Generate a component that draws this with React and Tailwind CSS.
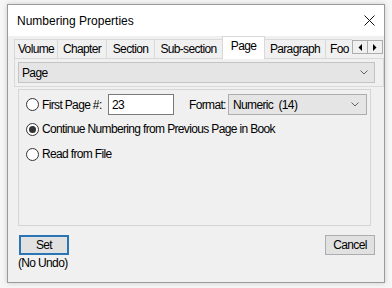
import React from 'react';

const tabs = [
  { label: 'Volume', w: 'w-[44px]' },
  { label: 'Chapter', w: 'w-[50px]' },
  { label: 'Section', w: 'w-[49px]' },
  { label: 'Sub-section', w: 'w-[69px]' },
  { label: 'Page', w: 'w-[43px]', active: true },
  { label: 'Paragraph', w: 'w-[62px]' },
  { label: 'Foo', w: 'w-[60px]', clipped: true },
];

const Chevron = () => (
  <svg width="8" height="5" viewBox="0 0 8 5" className="shrink-0">
    <path d="M0.5 0.5 L4 4 L7.5 0.5" fill="none" stroke="#606060" strokeWidth="1" />
  </svg>
);

const Radio = ({ checked }) => (
  <div className="flex h-[13px] w-[13px] shrink-0 items-center justify-center rounded-full border border-[#333] bg-white">
    {checked && <div className="h-[7px] w-[7px] rounded-full bg-[#333]" />}
  </div>
);

export default function App() {
  return (
    <div className="h-[288px] w-[392px] bg-[#f6f6f6] pl-[7px] pt-[4px] font-['Liberation_Sans',Arial,sans-serif] text-black">
      <div className="flex h-[279px] w-[378px] flex-col border border-[#9b9b9b] bg-[#f0f0f0] shadow-[0_0_5px_rgba(0,0,0,0.18)]">
        {/* Title bar */}
        <div className="flex h-[31px] shrink-0 items-center justify-between bg-white pl-[9px] pr-[9px]">
          <span className="text-[12px] leading-[16px]">Numbering Properties</span>
          <svg width="11" height="11" viewBox="0 0 11 11">
            <path d="M0.5 0.5 L10.5 10.5 M10.5 0.5 L0.5 10.5" stroke="#111" strokeWidth="1" />
          </svg>
        </div>

        <div className="text-[12px] leading-[14px] tracking-[-0.65px]">
          {/* Tab strip */}
          <div className="ml-[6px] flex h-[23px]">
            <div className="flex w-[338px] items-end overflow-hidden">
              {tabs.map((t, i) =>
                t.active ? (
                  <div
                    key={t.label}
                    className={`relative z-10 -ml-px flex h-[23px] shrink-0 justify-center border-x border-t border-[#d9d9d9] bg-white pt-[2px] ${t.w}`}
                  >
                    {t.label}
                  </div>
                ) : (
                  <div
                    key={t.label}
                    className={`flex h-[20px] shrink-0 items-center whitespace-nowrap border border-[#d9d9d9] bg-[#f0f0f0] ${t.clipped ? 'pl-[4px]' : 'justify-center'} ${i > 0 ? '-ml-px' : ''} ${t.w}`}
                  >
                    {t.label}
                  </div>
                )
              )}
            </div>
            <div className="flex h-[23px] w-[32px] items-start border-b border-[#d9d9d9] pt-[4px]">
              <div className="flex h-[14px] w-[16px] items-center justify-center border border-[#adadad] bg-[#f0f0f0]">
                <svg width="4" height="7" viewBox="0 0 4 7">
                  <polygon points="4,0 4,7 0.5,3.5" fill="#000" />
                </svg>
              </div>
              <div className="-ml-px flex h-[14px] w-[16px] items-center justify-center border border-[#adadad] bg-[#f0f0f0]">
                <svg width="4" height="7" viewBox="0 0 4 7">
                  <polygon points="0,0 0,7 3.5,3.5" fill="#000" />
                </svg>
              </div>
            </div>
          </div>

          {/* Tab panel with level dropdown */}
          <div className="ml-[6px] w-[370px] border-x border-b border-[#d9d9d9] px-[3px] py-[3px]">
            <div className="flex h-[21px] w-[357px] items-center justify-between border border-[#c4c4c4] bg-[#e5e5e5] pl-[3px] pr-[6px]">
              <span>Page</span>
              <Chevron />
            </div>
          </div>

          {/* Group box */}
          <div className="ml-[10px] mt-[2px] flex h-[137px] w-[353px] flex-col border border-[#d5d5d5] pl-[7px] pt-[4px]">
            <div className="flex h-[21px] items-center">
              <Radio />
              <span className="ml-[3px] w-[66px]">First Page #:</span>
              <div className="flex h-[21px] w-[66px] items-center border border-[#7a7a7a] bg-white pl-[3px]">23</div>
              <span className="ml-[15px] w-[39px]">Format:</span>
              <div className="flex h-[21px] w-[139px] items-center justify-between border border-[#adadad] bg-[#e5e5e5] pl-[4px] pr-[7px]">
                <span className="whitespace-pre">Numeric  (14)</span>
                <Chevron />
              </div>
            </div>
            <div className="mt-[6px] flex h-[16px] items-center">
              <Radio checked />
              <span className="ml-[3px]">Continue Numbering from Previous Page in Book</span>
            </div>
            <div className="mt-[9px] flex h-[16px] items-center">
              <Radio />
              <span className="ml-[3px]">Read from File</span>
            </div>
          </div>

          {/* Buttons */}
          <div className="mt-[9px] flex items-start justify-between pl-[11px] pr-[9px]">
            <div className="flex h-[20px] w-[50px] items-center justify-center border-2 border-[#2a75b3] bg-[#e1e1e1]">Set</div>
            <div className="flex h-[20px] w-[50px] items-center justify-center border border-[#adadad] bg-[#e1e1e1]">Cancel</div>
          </div>
          <div className="ml-[10px] mt-[1px]">(No Undo)</div>
        </div>
      </div>
    </div>
  );
}
